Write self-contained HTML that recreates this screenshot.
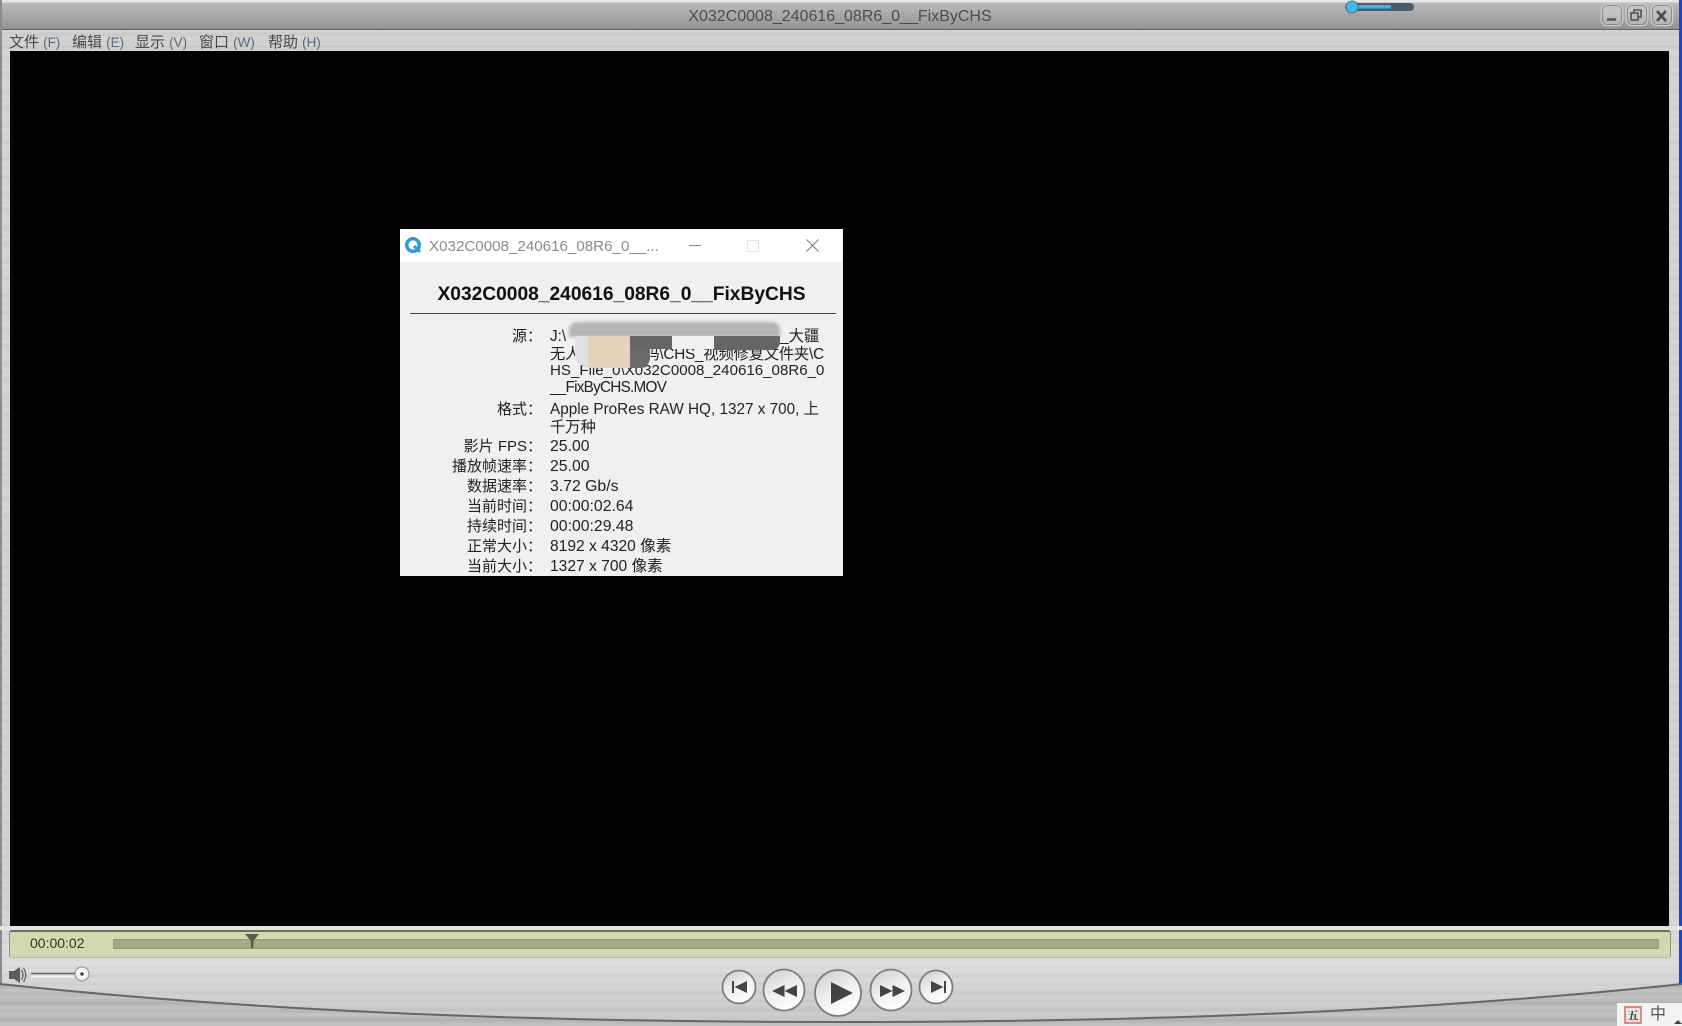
<!DOCTYPE html>
<html><head><meta charset="utf-8"><style>
html,body{margin:0;padding:0;background:#000}
#w{position:relative;width:1682px;height:1026px;overflow:hidden;font-family:"Liberation Sans","Noto Sans CJK SC",sans-serif;filter:blur(.3px);
background:repeating-linear-gradient(180deg,rgba(255,255,255,.10) 0,rgba(255,255,255,0) 3px,rgba(0,0,0,.03) 7px,rgba(255,255,255,.06) 10px,rgba(0,0,0,.02) 17px),linear-gradient(180deg,#d4d4d4 0,#d2d2d2 900px,#dedede 960px,#cacaca 1010px)}
.a{position:absolute;white-space:nowrap}
.m{top:33px;font-size:15px;line-height:20px;color:#4a4a4a}
.m span{color:#5b6a7c;font-size:13.4px}
.l{position:absolute;left:400px;width:142px;text-align:right;font-size:15px;line-height:20px;color:#222;white-space:nowrap}
.v{position:absolute;left:550px;font-size:15.3px;line-height:18px;color:#222;white-space:nowrap}
.n{font-size:15.8px}
.b{position:absolute;width:20px;height:20px;top:5px;border-radius:5px;background:linear-gradient(180deg,#c8c8c8,#b4b4b4);box-shadow:inset 0 0 0 1px #8a8a8a,0 0 0 1.500px #c8c8c8}
</style></head><body><div id="w">
<div class="a" style="left:0;top:0;width:1682px;height:30px;background:linear-gradient(180deg,#e6e6e6 0,#e6e6e6 2px,#bababa 3px,#949494 28px);border-bottom:1px solid #5e5e5e;box-sizing:border-box"></div>
<div class="a" style="left:0;top:30px;width:1682px;height:21px;background:repeating-linear-gradient(180deg,#d6d6d6 0,#cbcbcb 4px,#d4d4d4 8px,#cdcdcd 13px)"></div>
<div class="a" style="left:0;top:0;width:2px;height:1026px;background:#8d8d8d"></div>
<div class="a" style="left:1679px;top:0;width:3px;height:1026px;background:#1a48c0"></div>
<div class="a" style="left:688px;top:7px;width:304px;text-align:center;font-size:16px;line-height:20px;color:#4d4d4d">X032C0008_240616_08R6_0__FixByCHS</div>

<div class="a m" style="left:9px">文件 <span>(F)</span></div>
<div class="a m" style="left:72px">编辑 <span>(E)</span></div>
<div class="a m" style="left:135px">显示 <span>(V)</span></div>
<div class="a m" style="left:199px">窗口 <span>(W)</span></div>
<div class="a m" style="left:268px">帮助 <span>(H)</span></div>

<svg class="a" style="left:1340px;top:0" width="80" height="14"><rect x="5" y="3" width="69" height="8" rx="4" fill="#4d5c69"/><rect x="10" y="5" width="41" height="3.500" fill="#3fb4ea"/><circle cx="12" cy="7" r="6" fill="#3fbcf0" stroke="#56707f" stroke-width="1"/></svg>

<div class="b" style="left:1602px"></div><div class="b" style="left:1627px"></div><div class="b" style="left:1652px"></div>
<svg class="a" style="left:1600px;top:4px" width="76" height="24" fill="none" stroke="#4f4f4f" stroke-width="2"><path d="M7 15.500h9" stroke-width="2.400"/><path d="M31 9h7v7h-7zM34 9V6h7v7h-3" stroke-width="1.600"/><path d="M57 7l9 10M66 7l-9 10" stroke-width="2.800"/></svg>

<div class="a" style="left:10px;top:51px;width:1659px;height:875px;background:#000"></div>

<!-- dialog -->
<div class="a" style="left:400px;top:229px;width:443px;height:347px;background:#f0f0f0;overflow:hidden"></div>
<div class="a" style="left:400px;top:229px;width:442px;height:33px;background:#fff"></div>
<svg class="a" style="left:404px;top:236px" width="18" height="18"><circle cx="9" cy="9" r="6.300" fill="#fff" stroke="#2b9ad8" stroke-width="3.400"/><path d="M10 10l6 6" stroke="#2b9ad8" stroke-width="3"/></svg>
<div class="a" style="left:429px;top:236.500px;font-size:15.150px;line-height:20px;color:#8a8a8a">X032C0008_240616_08R6_0__...</div>
<svg class="a" style="left:680px;top:236px" width="150" height="20" fill="none"><path d="M9 9.500h12" stroke="#888"/><rect x="67.500" y="4.500" width="11" height="11" stroke="#e4e4e4"/><path d="M126.500 3.500l12 12M138.500 3.500l-12 12" stroke="#777"/></svg>
<div class="a" style="left:400px;top:283.500px;width:443px;text-align:center;font-size:19.200px;line-height:22px;font-weight:bold;color:#111">X032C0008_240616_08R6_0__FixByCHS</div>
<div class="a" style="left:410px;top:313px;width:426px;height:1px;background:#444"></div>

<div class="l" style="top:327px">源：</div>
<div class="v" style="top:327.500px">J:\<span style="display:inline-block;width:214px"></span>_大疆</div>
<div class="v" style="top:345.500px;letter-spacing:-.2px">无人<span style="display:inline-block;width:64px"></span>码\CHS_视频修复文件夹\C</div>
<div class="v" style="top:361.500px;font-size:15.100px">HS_File_0\X032C0008_240616_08R6_0</div>
<div class="v" style="top:379px;letter-spacing:-.75px">__FixByCHS.MOV</div>
<div class="l" style="top:400px">格式：</div>
<div class="v" style="top:400.500px">Apple ProRes RAW HQ, 1327 x 700, 上</div>
<div class="v" style="top:418.500px">千万种</div>
<div class="l" style="top:437px">影片 FPS：</div><div class="v n" style="top:437.500px">25.00</div>
<div class="l" style="top:457px">播放帧速率：</div><div class="v n" style="top:457.500px">25.00</div>
<div class="l" style="top:477px">数据速率：</div><div class="v n" style="top:477.500px">3.72 Gb/s</div>
<div class="l" style="top:497px">当前时间：</div><div class="v n" style="top:497.500px">00:00:02.64</div>
<div class="l" style="top:517px">持续时间：</div><div class="v n" style="top:517.500px">00:00:29.48</div>
<div class="l" style="top:537px">正常大小：</div><div class="v" style="top:537.500px;font-size:15.600px">8192 x 4320 像素</div>
<div class="l" style="top:557px">当前大小：</div><div class="v" style="top:557.500px;font-size:15.600px">1327 x 700 像素</div>

<!-- blur -->
<div class="a" style="left:569px;top:322px;width:211px;height:15px;background:#b4b4b4;border-radius:8px 8px 0 0;filter:blur(1.500px)"></div>
<div class="a" style="left:575px;top:336px;width:13px;height:30px;background:#e0e0e0;border-radius:0 0 0 10px"></div>
<div class="a" style="left:588px;top:336px;width:42px;height:32px;background:#e6d3bd"></div>
<div class="a" style="left:630px;top:336px;width:42px;height:13px;background:#666"></div>
<div class="a" style="left:630px;top:349px;width:20px;height:19px;background:#6b6b6b;border-radius:0 0 10px 0"></div>
<div class="a" style="left:672px;top:336px;width:42px;height:13px;background:#f0f0f0"></div>
<div class="a" style="left:714px;top:336px;width:66px;height:14px;background:#666;border-radius:0 0 8px 0"></div>

<!-- bottom -->
<div class="a" style="left:0;top:926px;width:1682px;height:4px;background:#e4e4e4"></div>
<div class="a" style="left:9px;top:930px;width:1662px;height:28px;box-sizing:border-box;background:#d3d8b0;border:1px solid #8f9378;border-top:2px solid #6e715a;border-bottom:1px solid #b9bd9c;border-radius:3px"></div>
<div class="a" style="left:113px;top:939px;width:1546px;height:10px;box-sizing:border-box;background:#a5a988;border:1px solid #94987a"></div>
<div class="a" style="left:30px;top:934px;font-size:14px;line-height:18px;color:#333">00:00:02</div>
<svg class="a" style="left:243px;top:932px" width="18" height="18"><path d="M2 2h14L10.500 9V16H8V9z" fill="#5a5a52"/></svg>

<svg class="a" style="left:0;top:960px" width="1682" height="66">
<defs><pattern id="st" width="40" height="17" patternUnits="userSpaceOnUse"><rect width="40" height="17" fill="#b9b9b9"/><rect y="2" width="40" height="3" fill="#c2c2c2"/><rect y="8" width="40" height="2" fill="#b2b2b2"/><rect y="12" width="40" height="3" fill="#c0c0c0"/></pattern>
<radialGradient id="k" cx=".5" cy=".35" r=".8"><stop offset="0" stop-color="#fff"/><stop offset=".6" stop-color="#f0f0f0"/><stop offset="1" stop-color="#c4c4c4"/></radialGradient></defs>
<path d="M0 24C300 56 600 62 841 62C1082 62 1382 56 1682 24V66H0Z" fill="url(#st)"/>
<path d="M0 24C300 56 600 62 841 62C1082 62 1382 56 1682 24" fill="none" stroke="#666" stroke-width="2"/>
<path d="M9 11h5l6-4v16l-6-4H9z" fill="#5c5c5c"/><path d="M21.500 10q3 5 0 10M23.500 8q4.500 7 0 14" fill="none" stroke="#666" stroke-width="1.300"/>
<path d="M31 13.500h46" stroke="#666" stroke-width="1.500"/><path d="M31 16.500h46" stroke="#f2f2f2" stroke-width="2"/>
<circle cx="82" cy="14" r="7" fill="url(#k)" stroke="#8a8a8a"/><circle cx="82" cy="14" r="1.800" fill="#444"/>
</svg>

<svg class="a" style="left:715px;top:960px" width="250" height="66" fill="#444">
<defs><linearGradient id="k2" x1=".2" y1="0" x2=".7" y2="1"><stop offset="0" stop-color="#d0d0d0"/><stop offset=".5" stop-color="#f0f0f0"/><stop offset="1" stop-color="#fff"/></linearGradient></defs>
<g fill="url(#k2)" stroke="#7c7c7c" stroke-width="1.800">
<circle cx="24" cy="27" r="16.500"/><circle cx="69" cy="30" r="20.500"/><circle cx="123" cy="33" r="23"/><circle cx="176" cy="30" r="20.500"/><circle cx="221" cy="27" r="16.500"/></g>
<path d="M17 21h2v12h-2zM19.500 27l12.500-6v12z"/>
<path d="M57 31l12.500-6v12zM69.500 31l12.500-6v12z"/>
<path d="M116 22l22 11-22 11z"/>
<path d="M165 25l12.500 6-12.500 6zM177.500 25l12.500 6-12.500 6z"/>
<path d="M229 21h2v12h-2zM216 21l12.500 6-12.500 6z"/>
</svg>

<!-- IME -->
<div class="a" style="left:1617px;top:1003px;width:65px;height:23px;background:#f3f3f3"></div>
<div class="a" style="left:1624px;top:1006px;width:18px;height:18px;box-sizing:border-box;border:2px solid #e08a7a;background:#e8e4dc;color:#333;font:bold 11px/14px 'Noto Serif CJK SC',serif;text-align:center">五</div>
<div class="a" style="left:1650px;top:1005px;font-size:16px;line-height:20px;color:#555">中</div>
<svg class="a" style="left:1674px;top:1018px" width="8" height="8"><path d="M0 6l4-4 4 4z" fill="#444"/></svg>
</div></body></html>
